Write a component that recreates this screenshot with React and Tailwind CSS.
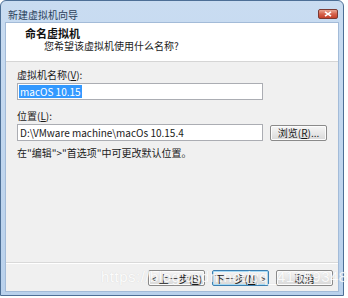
import React from "react";

const font = { fontFamily: '"Noto Sans CJK SC", "Noto Sans", sans-serif' };

function Btn({ children, primary, className = "" }) {
  return (
    <div
      className={`h-[16px] flex items-center justify-center rounded-[2px] border text-[10px] text-[#1a1a1a] bg-gradient-to-b from-[#f6f6f6] via-[#e8e8e8] to-[#d8d8d8] ${
        primary ? "border-[#3c7fb1] shadow-[inset_0_0_0_1px_#a8dbf5]" : "border-[#8a8a8a] shadow-[inset_0_0_0_1px_#fcfcfc]"
      } ${className}`}
    >
      {children}
    </div>
  );
}

export default function App() {
  return (
    <div className="w-[348px] h-[298px] bg-white relative overflow-hidden" style={font}>
      <div className="w-[344px] h-[296px] rounded-t-[6px] border border-[#4d6f96] bg-gradient-to-b from-[#c9dcf1] to-[#b9d1ec] flex flex-col">
        {/* title bar */}
        <div className="h-[21px] flex items-start justify-between pl-[7px] pr-[5px] shrink-0">
          <span className="text-[10px] leading-none mt-[9px] text-[#2b3f5a]">新建虚拟机向导</span>
          <div className="mt-[8px] w-[20px] h-[10px] rounded-[2px] border border-[#7a3a33] bg-gradient-to-b from-[#e8a593] via-[#d5614b] to-[#c4402a] flex items-center justify-center">
            <svg width="8" height="6" viewBox="0 0 8 6">
              <path d="M1 0.8 L7 5.2 M7 0.8 L1 5.2" stroke="#fff" strokeWidth="1.6" />
            </svg>
          </div>
        </div>
        {/* content */}
        <div className="mx-[4px] mb-[3px] flex-1 flex flex-col border border-[#a3bbd8]">
          <div className="h-[39px] bg-white border-b border-[#d5d5d5] shrink-0 pl-[19px] pt-[4px]">
            <div className="text-[11px] font-bold leading-[13px] text-[#111]">命名虚拟机</div>
            <div className="text-[10px] leading-[13px] text-[#222] pl-[19px] mt-[-1px]">您希望该虚拟机使用什么名称?</div>
          </div>
          <div className="flex-1 bg-[#f0f0f0] flex flex-col pl-[11px]">
            <div className="text-[10px] leading-[14px] text-[#1a1a1a] mt-[6px]">
              虚拟机名称(<span className="underline">V</span>):
            </div>
            <div className="w-[246px] h-[17px] mt-[1px] bg-white border border-[#abadb3] flex items-center pl-[1px]">
              <span className="bg-[#3399ff] text-white text-[10px] leading-[13px] px-[1px]">macOS 10.15</span>
            </div>
            <div className="text-[10px] leading-[14px] text-[#1a1a1a] mt-[9px]">
              位置(<span className="underline">L</span>):
            </div>
            <div className="flex items-center mt-[1px]">
              <div className="w-[246px] h-[17px] bg-white border border-[#abadb3] flex items-center pl-[2px] text-[10px] text-[#1a1a1a]">
                D:\VMware machine\macOs 10.15.4
              </div>
              <Btn className="ml-[7px] w-[57px] h-[15px]">
                浏览(<span className="underline">R</span>)...
              </Btn>
            </div>
            <div className="text-[10px] leading-[14px] text-[#1a1a1a] mt-[5px]">在"编辑"&gt;"首选项"中可更改默认位置。</div>
            <div className="flex-1" />
          </div>
          <div className="bg-[#f0f0f0] border-t border-[#d9d9d9] shrink-0 h-[29px] relative">
            <div className="border-t border-white" />
            <div className="flex justify-end pr-[5px] pt-[6px] gap-[7px]">
              <Btn className="w-[57px]">&lt; 上一步(<span className="underline">B</span>)</Btn>
              <Btn primary className="w-[57px]">下一步(<span className="underline">N</span>) &gt;</Btn>
              <Btn className="w-[57px]">取消</Btn>
            </div>
            <div
              className="absolute left-[95px] top-[6px] text-[15px] leading-none text-white opacity-80 tracking-[0.5px] pointer-events-none whitespace-nowrap"
              style={{ fontFamily: '"Liberation Sans", sans-serif', textShadow: "0 0 1px #ccc" }}
            >
              https://blog.csdn.net/qq_41659348
            </div>
          </div>
        </div>
      </div>
    </div>
  );
}
